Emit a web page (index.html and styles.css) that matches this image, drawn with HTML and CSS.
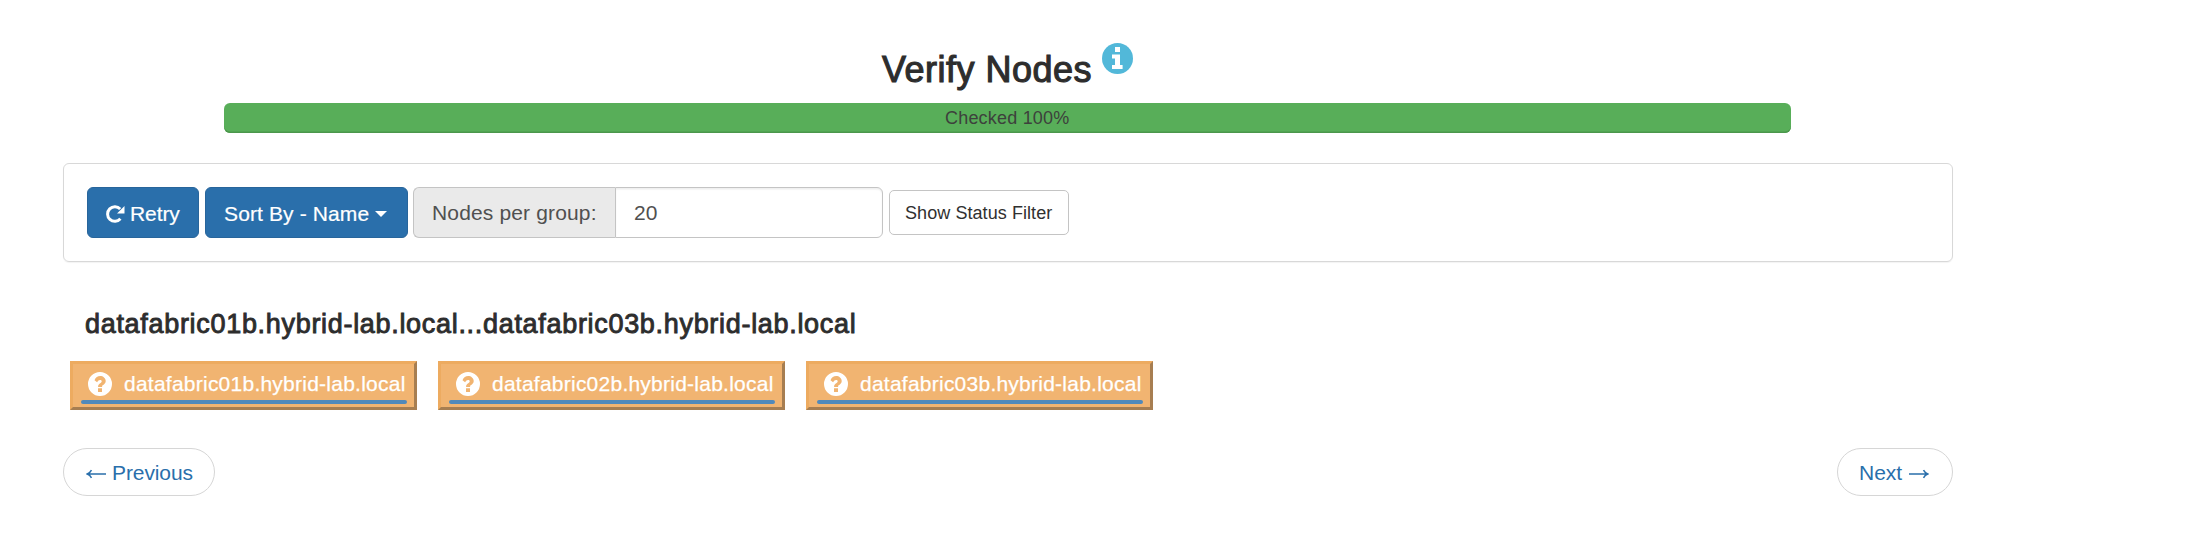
FILE: index.html
```
<!DOCTYPE html>
<html lang="en">
<head>
<meta charset="utf-8">
<title>Verify Nodes</title>
<link rel="stylesheet" href="styles.css">
</head>
<body>
<svg width="0" height="0" class="defs">
  <symbol id="question" viewBox="0 0 24 24">
    <path fill="#fff" fill-rule="evenodd" d="M12 0a12 12 0 1 1 0 24a12 12 0 0 1 0-24zM6.500 8.200l2.600 2c1-1.400 1.700-2.100 2.900-2.100c1 0 1.700.5 1.700 1.300c0 1.600-3.600 2-3.600 5v.6h4v-.5c0-1.600 3.600-2 3.600-5.400C17.700 6.100 15 4 12.200 4C9.600 4 7.700 5.200 6.500 8.200zM10 16.200v3.800h4v-3.800z"/>
  </symbol>
</svg>
<main class="page">
  <header class="title-row">
    <h1 class="title">Verify Nodes</h1>
    <svg class="info" viewBox="0 0 31 31"><circle cx="15.500" cy="15.500" r="15.500" fill="#52b8d9"/><path fill="#fff" d="M13 4h5v5h-5zM10 11.500h8v10.500h2.600v4H10v-4h3v-6.500h-3z"/></svg>
  </header>
  <div class="progress"><span class="progress-text">Checked 100%</span></div>
  <section class="toolbar">
    <button class="btn retry"><svg class="refresh" viewBox="0 0 19 18"><path d="M14.400 13.800A7.300 7.300 0 1 1 14.200 4" fill="none" stroke="#fff" stroke-width="3"/><path fill="#fff" d="M18.500 1v7.500H11z"/></svg><span>Retry</span></button>
    <button class="btn sort"><span>Sort By - Name</span><i class="caret"></i></button>
    <div class="group"><label class="addon" for="count"><span>Nodes per group:</span></label><input class="count" id="count" value="20"></div>
    <button class="filter"><span>Show Status Filter</span></button>
  </section>
  <h2 class="range"><span>datafabric01b.hybrid-lab.local...datafabric03b.hybrid-lab.local</span></h2>
  <div class="nodes">
    <div class="node"><div class="node-main"><svg class="q"><use href="#question"/></svg><span>datafabric01b.hybrid-lab.local</span></div><div class="bar"></div></div>
    <div class="node"><div class="node-main"><svg class="q"><use href="#question"/></svg><span>datafabric02b.hybrid-lab.local</span></div><div class="bar"></div></div>
    <div class="node"><div class="node-main"><svg class="q"><use href="#question"/></svg><span>datafabric03b.hybrid-lab.local</span></div><div class="bar"></div></div>
  </div>
  <nav class="pager">
    <a class="page-link prev"><svg class="arrow" viewBox="0 0 20 10"><path d="M20 5H1.500M5.500 1.200Q4 4 1.200 5Q4 6 5.500 8.800"/></svg><span>Previous</span></a>
    <a class="page-link next"><span>Next</span><svg class="arrow" viewBox="0 0 20 10"><path d="M0 5H18.500M14.500 1.200Q16 4 18.800 5Q16 6 14.500 8.800"/></svg></a>
  </nav>
</main>
</body>
</html>
```
FILE: styles.css
```
* { box-sizing: border-box; }
body { margin: 0; background: #fff; font-family: "Liberation Sans", Arial, sans-serif; font-size: 21px; color: #333; }
span, h1 { white-space: nowrap; }
.defs { display: block; }
.page { width: 1890px; margin-left: 63px; padding-top: 36px; }
.title-row { display: flex; height: 67px; padding: 7px 0 0 819px; }
.title { margin: 0; font-size: 36px; line-height: 54px; font-weight: 400; width: 210px; letter-spacing: 0.48px; -webkit-text-stroke: 1.1px #2d2d2d; color: #2d2d2d; }
.info { width: 31px; height: 31px; margin: 0 0 0 10px; }
.progress { width: 1567px; height: 30px; margin-left: 161px; border-radius: 6px; background: #58ae59; box-shadow: inset 0 -1.500px 0 #4b974c; font-size: 18px; line-height: 30px; letter-spacing: 0.2px; color: #3d413c; padding-left: 721px; }
.toolbar { height: 99px; margin-top: 30px; border: 1px solid #d8d8d8; border-radius: 6px; box-shadow: 0 1px 1px rgba(0,0,0,.05); display: flex; padding: 23px; align-items: center; }
.btn { height: 51px; border: 1px solid #28659b; border-radius: 6px; background: #2a6fab; color: #fff; font: inherit; padding: 2px 18px 0; display: flex; align-items: center; -webkit-text-stroke: 0.2px #fff; }
.retry { width: 112px; letter-spacing: -0.1px; }
.refresh { width: 19px; height: 18px; margin-right: 5px; flex: none; }
.sort { width: 203px; margin-left: 6px; padding-left: 18px; letter-spacing: 0.12px; }
.caret { border: 6px solid transparent; border-top-color: #fff; border-bottom: 0; margin-left: 6px; }
.group { display: flex; margin-left: 5px; }
.addon { width: 202px; height: 51px; border: 1px solid #c4c4c4; border-right: 0; border-radius: 6px 0 0 6px; background: #eaeaea; line-height: 50px; padding-left: 18px; letter-spacing: 0.15px; color: #505050; }
.count { width: 268px; height: 51px; border: 1px solid #c4c4c4; border-radius: 0 6px 6px 0; padding: 0 18px; font: inherit; color: #505050; box-shadow: inset 0 1.500px 1.500px rgba(0,0,0,.07); }
.filter { width: 180px; height: 45px; margin-left: 6px; border: 1px solid #c4c4c4; border-radius: 5px; background: #fff; font: 18px "Liberation Sans", Arial, sans-serif; letter-spacing: 0.07px; color: #303030; padding: 1px 0 0 15px; text-align: left; }
.range { margin: 44px 0 0 22px; font-size: 27px; line-height: 36px; font-weight: 400; letter-spacing: 0.69px; -webkit-text-stroke: 0.9px #2d2d2d; color: #2d2d2d; }
.nodes { display: flex; gap: 21px; margin: 19px 0 0 7px; }
.node { width: 347px; height: 49px; border: 3px solid; border-color: #edab60 #a77e51 #a77e51 #edab60; background: #f1b471; padding: 5px 7px 0 8px; color: #fff; }
.node-main { display: flex; align-items: center; height: 30px; padding-left: 7px; letter-spacing: 0.24px; -webkit-text-stroke: 0.25px #fff; }
.q { width: 24px; height: 24px; margin-right: 12px; flex: none; }
.bar { width: 326px; height: 4px; border-radius: 2px; background: #5089bb; margin-top: 1px; }
.pager { display: flex; justify-content: space-between; margin-top: 38px; }
.page-link { height: 48px; border: 1px solid #d6d6d6; border-radius: 24px; display: flex; align-items: center; color: #2a6fab; padding: 1px 22px 0; }
.prev { width: 152px; letter-spacing: -0.1px; }
.next { width: 116px; padding-left: 21px; }
.arrow { width: 20px; height: 10px; flex: none; fill: none; stroke: #2a6fab; stroke-width: 1.500; margin-top: 2px; }
.prev .arrow { margin-right: 6px; }
.next .arrow { margin-left: 7px; }
```
